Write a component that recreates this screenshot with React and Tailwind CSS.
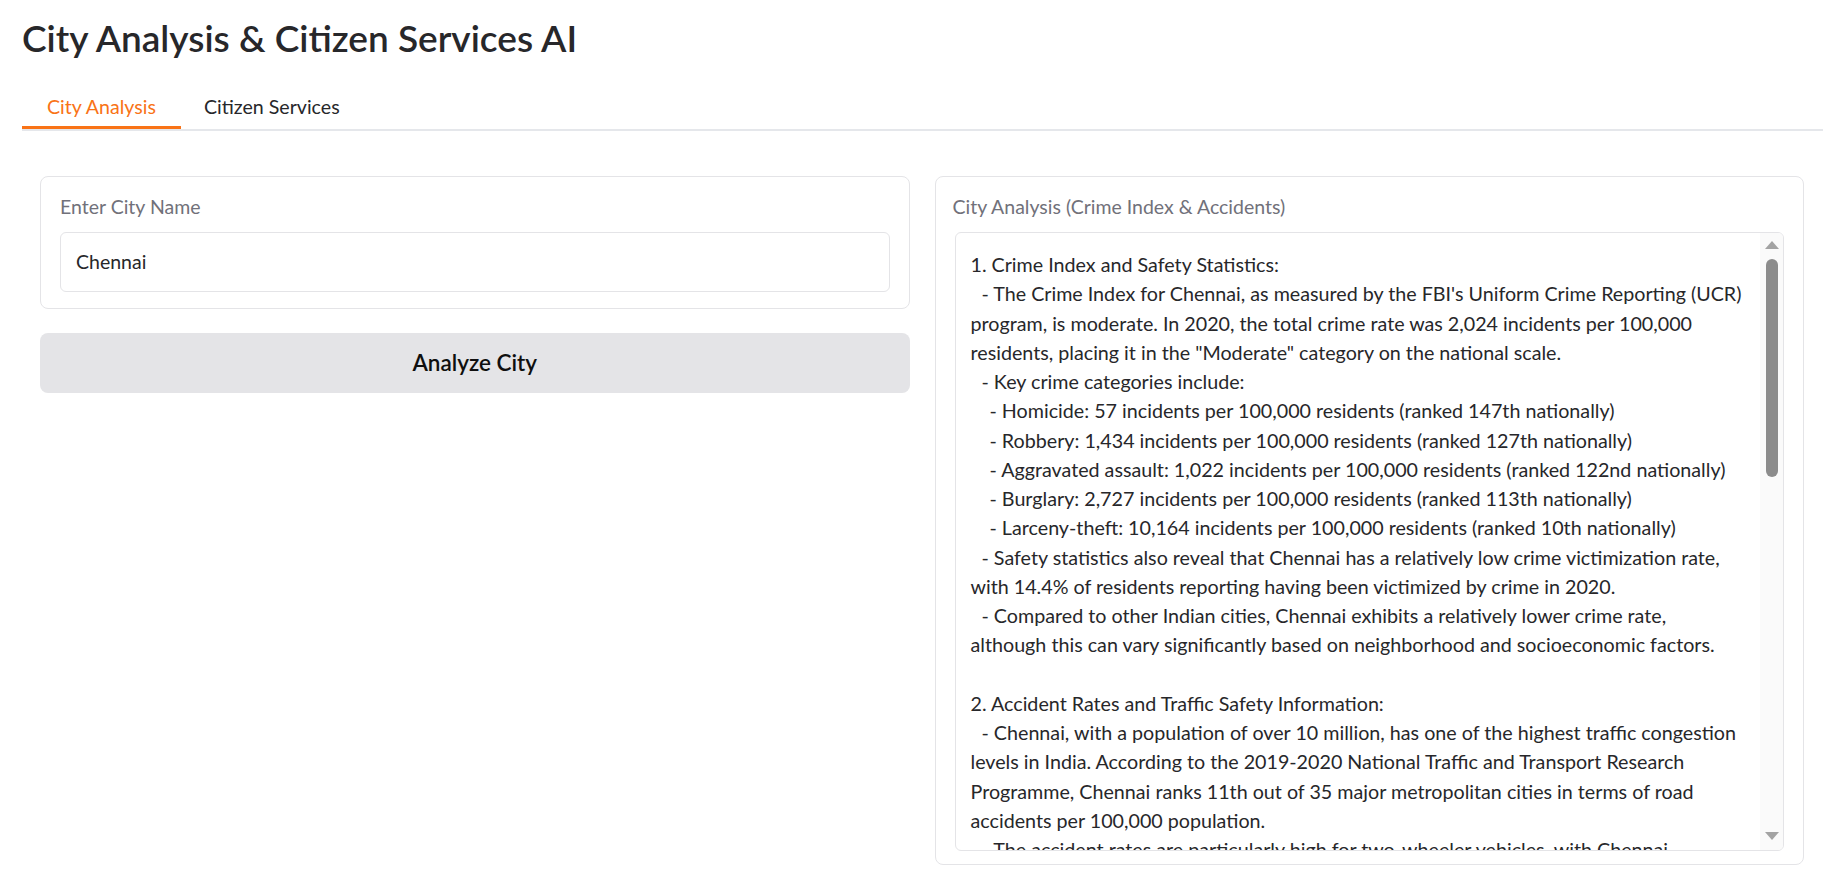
import React from 'react';

const lines = [
  [0, '1. Crime Index and Safety Statistics:'],
  [1, "- The Crime Index for Chennai, as measured by the FBI's Uniform Crime Reporting (UCR)"],
  [0, 'program, is moderate. In 2020, the total crime rate was 2,024 incidents per 100,000'],
  [0, 'residents, placing it in the "Moderate" category on the national scale.'],
  [1, '- Key crime categories include:'],
  [2, '- Homicide: 57 incidents per 100,000 residents (ranked 147th nationally)'],
  [2, '- Robbery: 1,434 incidents per 100,000 residents (ranked 127th nationally)'],
  [2, '- Aggravated assault: 1,022 incidents per 100,000 residents (ranked 122nd nationally)'],
  [2, '- Burglary: 2,727 incidents per 100,000 residents (ranked 113th nationally)'],
  [2, '- Larceny-theft: 10,164 incidents per 100,000 residents (ranked 10th nationally)'],
  [1, '- Safety statistics also reveal that Chennai has a relatively low crime victimization rate,'],
  [0, 'with 14.4% of residents reporting having been victimized by crime in 2020.'],
  [1, '- Compared to other Indian cities, Chennai exhibits a relatively lower crime rate,'],
  [0, 'although this can vary significantly based on neighborhood and socioeconomic factors.'],
  [0, ''],
  [0, '2. Accident Rates and Traffic Safety Information:'],
  [1, '- Chennai, with a population of over 10 million, has one of the highest traffic congestion'],
  [0, 'levels in India. According to the 2019-2020 National Traffic and Transport Research'],
  [0, 'Programme, Chennai ranks 11th out of 35 major metropolitan cities in terms of road'],
  [0, 'accidents per 100,000 population.'],
  [1, '- The accident rates are particularly high for two-wheeler vehicles, with Chennai'],
];

const indent = ['pl-0', 'pl-[11px]', 'pl-[19px]'];

export default function App() {
  return (
    <div className="min-h-screen bg-white font-['Lato','Noto_Sans',sans-serif] text-[#27272a]">
      <div className="pl-[22px] pr-[7px] pt-[14px]">
        <h1 className="h-[48px] leading-[48px] text-[37px] font-semibold text-[#27272a]">
          City Analysis &amp; Citizen Services AI
        </h1>

        <div className="mt-[19px] flex border-b-2 border-[#e5e7eb]">
          <button className="h-[48px] px-[25px] pt-[6px] -mb-[2px] border-b-[3px] border-[#f97316] text-[19.6px] text-[#f97316]">
            City Analysis
          </button>
          <button className="h-[48px] px-[23px] pt-[3px] text-[19.6px] text-[#27272a]">
            Citizen Services
          </button>
        </div>

        <div className="mt-[45px] pl-[18px] pr-[19px] grid grid-cols-2 gap-[25px] items-start">
          <div className="flex flex-col gap-[24px]">
            <div className="border border-[#e4e4e7] rounded-[8px] bg-white px-[19px] pt-[15px] pb-[16px]">
              <div className="text-[19.5px] leading-[29px] text-[#71717a]">Enter City Name</div>
              <div className="mt-[11px] h-[60px] border border-[#e4e4e7] rounded-[6px] flex items-center px-[15px] text-[19.5px]">
                Chennai
              </div>
            </div>
            <button className="h-[60px] rounded-[8px] bg-[#e4e4e7] text-[22.5px] font-semibold text-[#0f0f0f]">
              Analyze City
            </button>
          </div>

          <div className="border border-[#e4e4e7] rounded-[8px] bg-white px-[19px] pt-[15px] pb-[13px]">
            <div className="text-[19.5px] leading-[29px] text-[#71717a] -ml-[2px]">
              City Analysis (Crime Index &amp; Accidents)
            </div>
            <div className="mt-[11px] h-[619px] border border-[#e4e4e7] rounded-[6px] flex overflow-hidden">
              <div className="flex-1 overflow-hidden pl-[15px] pt-[17px] text-[19.7px] leading-[29.25px]">
                {lines.map(([lvl, t], i) => (
                  <div key={i} className={`whitespace-nowrap h-[29.25px] ${indent[lvl]}`}>
                    {t}
                  </div>
                ))}
              </div>
              <div className="w-[23px] bg-[#fafafa] flex flex-col items-center pt-[8px] pb-[10px]">
                <svg width="14" height="8" viewBox="0 0 14 8">
                  <path d="M7 0 L14 8 L0 8 Z" fill="#a3a3a3" />
                </svg>
                <div className="mt-[10px] w-[12px] h-[218px] rounded-full bg-[#8c8c8c]" />
                <div className="flex-1" />
                <svg width="14" height="8" viewBox="0 0 14 8">
                  <path d="M0 0 L14 0 L7 8 Z" fill="#a3a3a3" />
                </svg>
              </div>
            </div>
          </div>
        </div>
      </div>
    </div>
  );
}
